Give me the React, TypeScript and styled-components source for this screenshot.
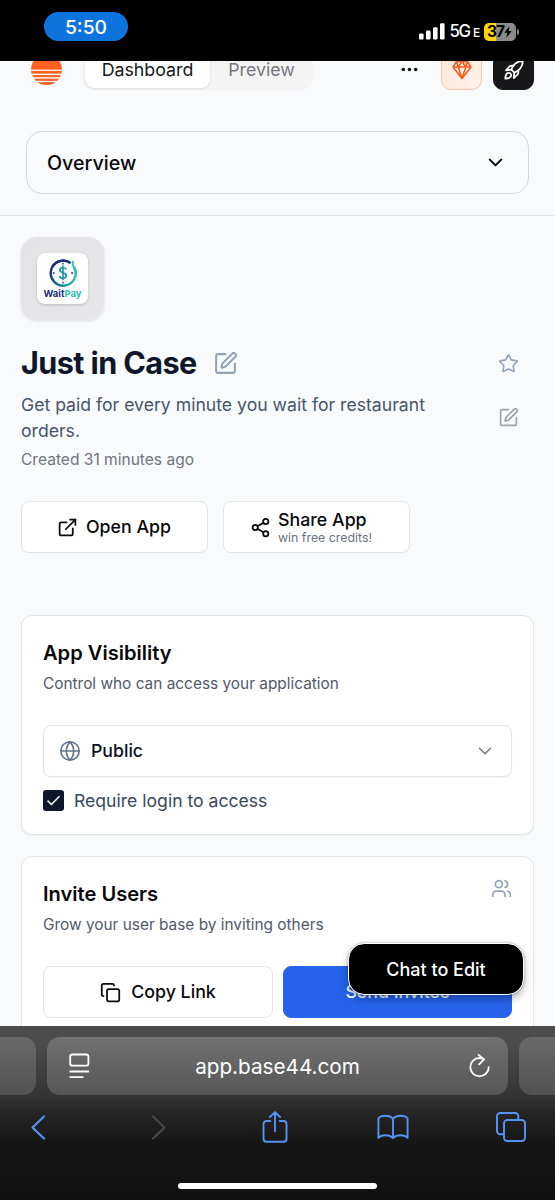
import React from "react";
import styled, { createGlobalStyle } from "styled-components";
import {
  ChevronDown,
  Copy,
  ExternalLink,
  Globe,
  Share2,
  SquarePen,
  Star,
  Users,
} from "lucide-react";

const GlobalStyle = createGlobalStyle`
  *, *::before, *::after { box-sizing: border-box; }
  body {
    margin: 0;
    font-family: Inter, "Liberation Sans", sans-serif;
    color: #020817;
    background: #000;
  }
  button { font-family: inherit; margin: 0; }
  svg { display: block; flex: none; }
`;

const Screen = styled.div`
  display: flex;
  flex-direction: column;
  width: 555px;
  height: 1200px;
  overflow: hidden;
  position: relative;
`;

/* ---------- iOS status bar ---------- */

const StatusBar = styled.header`
  display: flex;
  align-items: flex-start;
  justify-content: space-between;
  flex: none;
  height: 61px;
  padding: 12px 36px 0 44px;
  background: #000;
  color: #fff;
`;

const TimePill = styled.div`
  width: 84px;
  height: 29px;
  border-radius: 15px;
  background: #0d74de;
  font-size: 19.3px;
  font-weight: 500;
  line-height: 31px;
  text-align: center;
`;

const Signals = styled.div`
  display: flex;
  align-items: center;
  height: 21px;
  margin-top: 9px;
`;

const Network = styled.span`
  margin-left: 4px;
  font-size: 16.8px;
  font-weight: 500;
  line-height: 22px;
  letter-spacing: -1.2px;
  white-space: nowrap;

  small {
    margin-left: 3px;
    font-size: 12px;
    font-weight: 500;
  }
`;

const Battery = styled.div`
  display: flex;
  align-items: center;
  width: 32px;
  height: 18px;
  margin-left: 5px;
  padding-left: 3px;
  border-radius: 5px;
  background: linear-gradient(90deg, #fcd50d 37%, #8b8b8b 37%);
  color: #000;
  font-size: 15.5px;
  font-weight: 700;
  letter-spacing: -1px;
`;

const BatteryCap = styled.i`
  width: 2px;
  height: 6px;
  margin-left: 1px;
  border-radius: 0 2px 2px 0;
  background: #7d7d7d;
`;

/* ---------- web page ---------- */

const WebPage = styled.main`
  flex: none;
  height: 965px;
  overflow: hidden;
  background: #f9fafc;
`;

const TopBar = styled.div`
  display: flex;
  align-items: center;
  height: 41px;
  margin-top: -12px;
  padding: 0 21px 0 31px;
`;

const Segments = styled.div`
  display: flex;
  align-items: center;
  width: 229px;
  height: 41px;
  margin: 0 auto 0 22px;
  padding: 2px 0 2px 1px;
  border-radius: 11px;
  background: #f4f4f5;
`;

const Segment = styled.span<{ $active?: boolean }>`
  flex: none;
  width: ${(p) => (p.$active ? 125 : 103)}px;
  height: 37px;
  border-radius: 9px;
  background: ${(p) => (p.$active ? "#fff" : "transparent")};
  box-shadow: ${(p) => (p.$active ? "0 1px 3px rgba(0,0,0,.1)" : "none")};
  color: ${(p) => (p.$active ? "#18181b" : "#77777d")};
  font-size: 17.8px;
  line-height: 38px;
  text-align: center;
`;

const SquareButton = styled.button<{ $dark?: boolean }>`
  display: grid;
  place-items: center;
  width: 41px;
  height: 41px;
  margin-left: ${(p) => (p.$dark ? 11 : 23)}px;
  padding: 0;
  border: 1px solid ${(p) => (p.$dark ? "#18181b" : "#fdc3a8")};
  border-radius: 10px;
  background: ${(p) => (p.$dark ? "#18181b" : "linear-gradient(90deg, #ffeadd, #fff1e8)")};
  color: ${(p) => (p.$dark ? "#fff" : "#fb5a1b")};
`;

const SectionNav = styled.nav`
  height: 126px;
  padding: 41px 26px 0;
  border-bottom: 1px solid #e5e6e9;
`;

const SectionSelect = styled.button`
  display: flex;
  align-items: center;
  justify-content: space-between;
  width: 503px;
  height: 63px;
  padding: 0 21px 0 20px;
  border: 1px solid #d6d8dc;
  border-radius: 16px;
  background: transparent;
  color: #09090b;
  font-size: 19.7px;
  font-weight: 500;
`;

const Content = styled.div`
  padding: 21px 21px 0;
`;

const AppIcon = styled.div`
  display: grid;
  place-items: center;
  width: 83px;
  height: 83px;
  border-radius: 16px;
  background: linear-gradient(135deg, #e4e4e6, #e6e6e8);
  box-shadow: 0 1px 3px rgba(0, 0, 0, 0.12);
`;

const AppLogo = styled.div`
  display: flex;
  flex-direction: column;
  align-items: center;
  width: 51px;
  height: 51px;
  padding-top: 5px;
  border-radius: 8px;
  background: #fff;
  box-shadow: 0 1px 3px rgba(0, 0, 0, 0.18);
`;

const LogoName = styled.span`
  color: #1f2f7c;
  font-size: 9.5px;
  font-weight: 700;
  line-height: 12px;

  em {
    color: #2fc0ae;
    font-style: normal;
  }
`;

const TitleRow = styled.div`
  display: flex;
  align-items: center;
  height: 42px;
  margin-top: 22px;
  padding-right: 15px;
  color: #94a3b8;
`;

const Title = styled.h1`
  margin: 0 16px 0 0;
  color: #0f172a;
  font-size: 30.6px;
  font-weight: 700;
  letter-spacing: -0.6px;
  line-height: 40px;
  white-space: nowrap;
`;

const Push = styled.span`
  margin-left: auto;
`;

const DescriptionRow = styled.div`
  display: flex;
  align-items: center;
  justify-content: space-between;
  height: 52px;
  margin-top: 8px;
  padding-right: 15px;
  color: #a1a1aa;

  svg {
    margin-top: -2px;
  }
`;

const Description = styled.p`
  width: 420px;
  margin: 0;
  color: #475569;
  font-size: 17.64px;
  line-height: 26px;
`;

const Created = styled.p`
  margin: 4px 0 0;
  color: #71757e;
  font-size: 15.55px;
  line-height: 24px;
`;

const Actions = styled.div<{ $gap: number; $top: number }>`
  display: flex;
  gap: ${(p) => p.$gap}px;
  margin-top: ${(p) => p.$top}px;
`;

const ActionButton = styled.button<{
  $width: number;
  $primary?: boolean;
  $iconGap?: number;
  $endPadding?: number;
}>`
  display: flex;
  align-items: center;
  justify-content: center;
  gap: ${(p) => p.$iconGap ?? 8}px;
  width: ${(p) => p.$width}px;
  height: 52px;
  padding: 0 ${(p) => p.$endPadding ?? 0}px 0 0;
  border: 1px solid ${(p) => (p.$primary ? "#2563eb" : "#e2e4e9")};
  border-radius: 8px;
  background: ${(p) => (p.$primary ? "#2563eb" : "#fff")};
  color: ${(p) => (p.$primary ? "#fff" : "#09090b")};
  font-size: 17.8px;
  font-weight: 500;
  line-height: 24px;
`;

const TwoLine = styled.span`
  display: flex;
  flex-direction: column;
  align-items: flex-start;
  line-height: 21px;

  small {
    color: #6b7280;
    font-size: 12.35px;
    font-weight: 400;
    line-height: 15px;
  }
`;

const Card = styled.section<{ $top: number; $height: number }>`
  position: relative;
  width: 513px;
  height: ${(p) => p.$height}px;
  margin-top: ${(p) => p.$top}px;
  padding: 23px 21px 0;
  border: 1px solid #e2e5ea;
  border-radius: 11px;
  background: #fff;
  box-shadow: 0 1px 2px rgba(0, 0, 0, 0.05);
`;

const CardHeader = styled.div`
  display: flex;
  justify-content: space-between;
  color: #94a3b8;

  svg {
    margin-top: -2px;
  }
`;

const CardTitle = styled.h2`
  margin: 0;
  color: #09090b;
  font-size: 20.1px;
  font-weight: 600;
  line-height: 28px;
`;

const CardText = styled.p`
  margin: 7px 0 0;
  color: #52596a;
  font-size: 15.4px;
  line-height: 20px;
`;

const VisibilitySelect = styled.button`
  display: flex;
  align-items: center;
  width: 469px;
  height: 52px;
  margin-top: 31px;
  padding: 0 15px 0 15px;
  border: 1px solid #e2e5ec;
  border-radius: 8px;
  background: #fff;
  box-shadow: 0 1px 2px rgba(0, 0, 0, 0.05);
  color: #64748b;

  span {
    margin: -1px auto 0 10px;
    color: #0b1020;
    font-size: 17.7px;
    font-weight: 500;
  }
`;

const CheckRow = styled.label`
  display: flex;
  align-items: center;
  gap: 10px;
  height: 22px;
  margin-top: 12px;
  color: #3b475a;
  font-size: 17.6px;
`;

const CheckBox = styled.span`
  display: grid;
  place-items: center;
  width: 21px;
  height: 21px;
  border-radius: 3px;
  background: #0f172a;
`;

const ChatButton = styled.button`
  position: absolute;
  left: 348px;
  top: 943px;
  width: 176px;
  height: 52px;
  padding: 0;
  border: 1.5px solid #fff;
  border-radius: 16px;
  background: #000;
  background-clip: padding-box;
  box-shadow: 0 0 2px rgba(0, 0, 0, 0.35), 0 4px 9px rgba(0, 0, 0, 0.3);
  color: #fff;
  font-size: 18px;
  font-weight: 500;
  line-height: 49px;
`;

/* ---------- Safari chrome ---------- */

const BrowserChrome = styled.footer`
  display: flex;
  flex-direction: column;
  align-items: center;
  height: 174px;
  flex: none;
  padding-top: 11px;
  background: linear-gradient(#4b4b4b 0, #4d4d4d 14px, #353535 68px, #232323 90px, #141414 122px, #111 174px);
`;

const TabStrip = styled.div`
  display: flex;
  justify-content: center;
  gap: 11px;
  width: 100%;
`;

const AddressBar = styled.div`
  display: flex;
  align-items: center;
  justify-content: space-between;
  flex: none;
  width: 461px;
  height: 58px;
  padding: 0 18px 0 22px;
  border-radius: 13px;
  background: linear-gradient(#717171, #565656);
  color: #fff;
  font-size: 20.7px;

  span {
    margin-right: 4px;
  }
`;

const NeighbourTab = styled.div<{ $side: "left" | "right" }>`
  flex: 1;
  height: 58px;
  border-radius: ${(p) => (p.$side === "left" ? "0 13px 13px 0" : "13px 0 0 13px")};
  background: linear-gradient(#696969, #525252);
`;

const Toolbar = styled.div`
  display: flex;
  align-items: center;
  justify-content: center;
  width: 100%;
  height: 44px;
  margin-top: 10px;
  padding-right: 6px;
  color: #5594f5;
`;

const ToolbarItem = styled.span`
  display: flex;
  justify-content: center;
  flex: none;
  width: 118.2px;
`;

const HomeIndicator = styled.div`
  width: 199px;
  height: 6px;
  margin-top: 34px;
  border-radius: 3px;
  background: #fff;
`;

/* ---------- drawings ---------- */

const SignalBars = () => (
  <svg width="26" height="17" viewBox="0 0 26 17" fill="#fff">
    <rect x="0" y="10.5" width="4.6" height="6" rx="1.3" />
    <rect x="7" y="7.6" width="4.6" height="8.9" rx="1.3" />
    <rect x="14" y="4.2" width="4.6" height="12.3" rx="1.3" />
    <rect x="21" y="0.3" width="4.6" height="16.2" rx="1.3" />
  </svg>
);

const Bolt = () => (
  <svg width="8" height="12" viewBox="0 0 8 12" fill="#000">
    <path d="M5.6 0 0.3 6.8h3.1L2.3 12 7.7 5H4.5z" />
  </svg>
);

const SunMark = () => (
  <svg width="31" height="31" viewBox="0 0 31 31">
    <circle cx="15.5" cy="15.5" r="15.5" fill="#ff5f1f" />
    <g fill="#f9fafc">
      <rect y="15.6" width="31" height="1.3" />
      <rect y="19.6" width="31" height="1.5" />
      <rect y="23.2" width="31" height="1.5" />
      <rect y="26.8" width="31" height="1.3" />
    </g>
  </svg>
);

const Dots = () => (
  <svg width="17" height="5" viewBox="0 0 17 5" fill="#111">
    <circle cx="2.3" cy="2.5" r="1.8" />
    <circle cx="8.5" cy="2.5" r="1.8" />
    <circle cx="14.7" cy="2.5" r="1.8" />
  </svg>
);

const Diamond = () => (
  <svg width="20" height="20" viewBox="0 0 20 20" fill="none" stroke="currentColor" strokeWidth="1.5" strokeLinejoin="round">
    <path d="M4.5 1.5h11L19 7l-9 11.5L1 7zM1 7h18M6.2 7 10 18.5 13.8 7M4.5 1.5 6.2 7 10 1.5 13.8 7l1.7-5.5" />
  </svg>
);

const RocketIcon = () => (
  <svg width="22" height="22" viewBox="0 0 22 22" fill="none" stroke="currentColor" strokeWidth="1.8" strokeLinecap="round" strokeLinejoin="round">
    <path d="M8.3 10.7C9.5 6 14 2 19.8 2c0 5.8-4 10.3-8.5 11.7z" />
    <path d="M8.3 10.7 3 11.3l3.6-3.9q1-1 4-.7" />
    <path d="M11.3 13.7l-.5 5.3 3.9-3.6q1-1 .6-4" />
    <path d="M5.4 13.8C3.2 14 2.5 16 2.3 19.6 5.8 19.4 8 18.7 8.1 16.5c0-1.7-1-2.8-2.7-2.7z" />
  </svg>
);

const ClockLogo = () => (
  <svg width="30" height="30" viewBox="0 0 30 30" fill="none">
    <defs>
      <linearGradient id="ring" x1="4" y1="8" x2="28" y2="20" gradientUnits="userSpaceOnUse">
        <stop stopColor="#1d2f78" />
        <stop offset="0.5" stopColor="#1c6f9c" />
        <stop offset="1" stopColor="#2cc5b0" />
      </linearGradient>
    </defs>
    <path d="M26 8.8A12.5 12.5 0 1 1 22.5 5" stroke="url(#ring)" strokeWidth="2.4" />
    <path d="M22.5 5A12.5 12.5 0 0 0 4.5 8.5" stroke="#1d2f78" strokeWidth="2.4" />
    <path d="M25.2 3c-1.2 2.5-.5 4.5.6 6.5 1 2 1.4 3.5 1.3 5.5" stroke="#35cbb3" strokeWidth="2" />
    <path d="M15 4.8v1.6M15 23.8v1.6M4.8 15h1.8M23.2 15h1.8" stroke="#1d2f78" strokeWidth="1.3" />
    <path d="M18.2 11.5c-.5-1.5-1.7-2-3.2-2-1.8 0-3.2.9-3.2 2.5 0 3.5 6.5 2.2 6.5 5.5 0 1.7-1.4 2.7-3.3 2.7-1.7 0-3-.7-3.5-2.3M15 7.5v14.8" stroke="#209aa5" strokeWidth="1.7" />
  </svg>
);

const Check = () => (
  <svg width="17" height="17" viewBox="0 0 17 17" fill="none" stroke="#fff" strokeWidth="1.5">
    <path d="m2.5 8.6 4 3.9 8-8.2" />
  </svg>
);

const PageMenu = () => (
  <svg width="21" height="26" viewBox="0 0 21 26" fill="none" stroke="#fff" strokeWidth="1.8" strokeLinecap="round">
    <rect x="1.2" y="1.5" width="18.2" height="11.2" rx="2.3" />
    <path d="M1.2 18.5h18.2M1.2 24.1h12.6" />
  </svg>
);

const Reload = () => (
  <svg width="21" height="25" viewBox="0 0 21 25" fill="none" stroke="#fff" strokeWidth="1.8" strokeLinecap="round" strokeLinejoin="round">
    <path d="M19.7 13.2a9.2 9.2 0 1 1-9.2-9.2q2.2 0 4.500 1.3M9.6.9l5.500 4.500-5 5" />
  </svg>
);

const Back = () => (
  <svg width="15" height="25" viewBox="0 0 15 25" fill="none" stroke="currentColor" strokeWidth="2.2" strokeLinecap="round" strokeLinejoin="round">
    <path d="M13 1.5 1.5 12.5 13 23.5" />
  </svg>
);

const Forward = () => (
  <svg width="19" height="25" viewBox="-4 0 19 25" fill="none" stroke="#4a4a4a" strokeWidth="2" strokeLinecap="round" strokeLinejoin="round">
    <path d="M2 1.5 13.5 12.5 2 23.5" />
  </svg>
);

const ShareSheet = () => (
  <svg width="26" height="32" viewBox="0 0 26 32" fill="none" stroke="currentColor" strokeWidth="1.9" strokeLinecap="round" strokeLinejoin="round">
    <path d="M8.3 10H4.5a3 3 0 0 0-3 3v14.700a3 3 0 0 0 3 3h17a3 3 0 0 0 3-3V13a3 3 0 0 0-3-3h-3.800M13 20.200V1.200M8 6l5-4.900 5 4.900" />
  </svg>
);

const Bookmarks = () => (
  <svg width="32" height="26" viewBox="0 0 34 26" fill="none" stroke="currentColor" strokeWidth="2" strokeLinejoin="round">
    <path d="M17 4.2C15 1.8 12 1 9 1S3 1.9 1.5 4v20.500c2-2 4.600-2.700 7.500-2.700s6 .9 8 2.900c2-2 5.100-2.900 8-2.900s5.500.7 7.500 2.700V4C31 1.900 28 1 25 1S19 1.800 17 4.200zM17 4.200v20.500" />
  </svg>
);

const TabsIcon = () => (
  <svg width="30" height="30" viewBox="0 0 30 30" fill="none" stroke="currentColor" strokeWidth="1.9">
    <rect x="8" y="8" width="21" height="21" rx="3.2" />
    <path d="M8 22.3H4.200a3.200 3.200 0 0 1-3.200-3.200V4.200A3.200 3.200 0 0 1 4.200 1h14.900a3.200 3.200 0 0 1 3.200 3.200V8" />
  </svg>
);

export default function App() {
  return (
    <Screen>
      <GlobalStyle />
      <StatusBar>
        <TimePill>5:50</TimePill>
        <Signals>
          <SignalBars />
          <Network>
            5G<small>E</small>
          </Network>
          <Battery>
            37
            <Bolt />
          </Battery>
          <BatteryCap />
        </Signals>
      </StatusBar>

      <WebPage>
        <TopBar>
          <SunMark />
          <Segments>
            <Segment $active>Dashboard</Segment>
            <Segment>Preview</Segment>
          </Segments>
          <Dots />
          <SquareButton>
            <Diamond />
          </SquareButton>
          <SquareButton $dark>
            <RocketIcon />
          </SquareButton>
        </TopBar>

        <SectionNav>
          <SectionSelect>
            Overview
            <ChevronDown size={23} strokeWidth={2.2} />
          </SectionSelect>
        </SectionNav>

        <Content>
          <AppIcon>
            <AppLogo>
              <ClockLogo />
              <LogoName>
                Wait<em>Pay</em>
              </LogoName>
            </AppLogo>
          </AppIcon>

          <TitleRow>
            <Title>Just in Case</Title>
            <SquarePen size={25} strokeWidth={2} />
            <Push>
              <Star size={21} strokeWidth={1.9} />
            </Push>
          </TitleRow>
          <DescriptionRow>
            <Description>Get paid for every minute you wait for restaurant orders.</Description>
            <SquarePen size={21} strokeWidth={1.9} />
          </DescriptionRow>
          <Created>Created 31 minutes ago</Created>

          <Actions $gap={15} $top={29}>
            <ActionButton $width={187} $endPadding={1}>
              <ExternalLink size={21} strokeWidth={2} />
              Open App
            </ActionButton>
            <ActionButton $width={187} $iconGap={7} $endPadding={11}>
              <Share2 size={21} strokeWidth={2} />
              <TwoLine>
                Share App
                <small>win free credits!</small>
              </TwoLine>
            </ActionButton>
          </Actions>

          <Card $top={62} $height={220}>
            <CardTitle>App Visibility</CardTitle>
            <CardText>Control who can access your application</CardText>
            <VisibilitySelect>
              <Globe size={22} strokeWidth={1.8} />
              <span>Public</span>
              <ChevronDown size={22} strokeWidth={1.8} color="#777c86" />
            </VisibilitySelect>
            <CheckRow>
              <CheckBox>
                <Check />
              </CheckBox>
              Require login to access
            </CheckRow>
          </Card>

          <Card $top={21} $height={220}>
            <CardHeader>
              <CardTitle>Invite Users</CardTitle>
              <Users size={21} strokeWidth={1.9} />
            </CardHeader>
            <CardText>Grow your user base by inviting others</CardText>
            <Actions $gap={10} $top={31}>
              <ActionButton $width={230} $iconGap={10}>
                <Copy size={21} strokeWidth={2} />
                Copy Link
              </ActionButton>
              <ActionButton $width={229} $primary>
                Send Invites
              </ActionButton>
            </Actions>
          </Card>
        </Content>
        <ChatButton>Chat to Edit</ChatButton>
      </WebPage>

      <BrowserChrome>
        <TabStrip>
          <NeighbourTab $side="left" />
          <AddressBar>
            <PageMenu />
            <span>app.base44.com</span>
            <Reload />
          </AddressBar>
          <NeighbourTab $side="right" />
        </TabStrip>
        <Toolbar>
          <ToolbarItem>
            <Back />
          </ToolbarItem>
          <ToolbarItem>
            <Forward />
          </ToolbarItem>
          <ToolbarItem>
            <ShareSheet />
          </ToolbarItem>
          <ToolbarItem>
            <Bookmarks />
          </ToolbarItem>
          <ToolbarItem>
            <TabsIcon />
          </ToolbarItem>
        </Toolbar>
        <HomeIndicator />
      </BrowserChrome>
    </Screen>
  );
}
